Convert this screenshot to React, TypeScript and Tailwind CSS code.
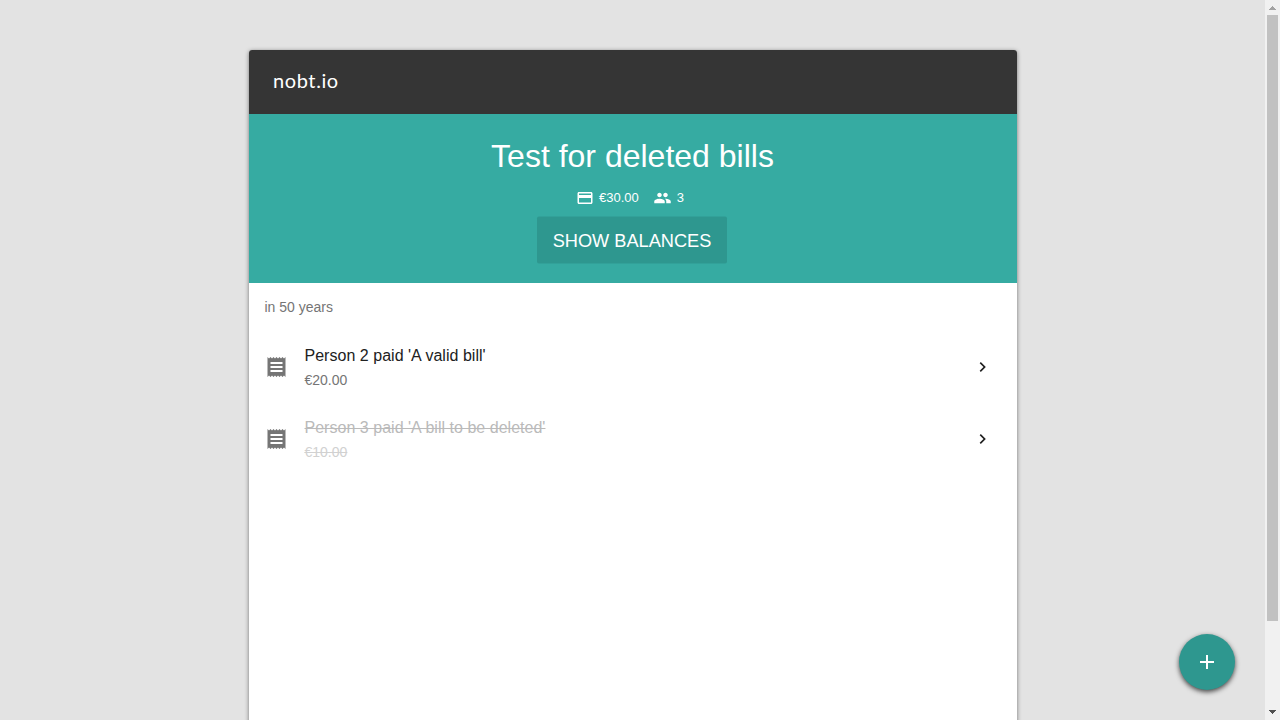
import { MdAdd, MdChevronRight, MdGroup, MdPayment, MdReceipt } from "react-icons/md";

type Bill = { title: string; amount: string; deleted: boolean };

const bills: Bill[] = [
  { title: "Person 2 paid 'A valid bill'", amount: "€20.00", deleted: false },
  { title: "Person 3 paid 'A bill to be deleted'", amount: "€10.00", deleted: true },
];

function BillRow({ title, amount, deleted }: Bill) {
  return (
    <li className="flex h-[72px] items-center pr-4 pl-[15.5px]">
      <MdReceipt className="size-6 shrink-0 translate-x-[0.5px] text-[#757575]" />
      <div className="ml-[16.5px] grow">
        <div className={deleted ? "pt-px text-base leading-6 tracking-[0.025px] text-[#bababa] line-through" : "pt-px text-base leading-6 tracking-[0.025px] text-[#212121]"}>{title}</div>
        <div className={deleted ? "pt-px text-sm leading-[22px] text-[#d1d1d1] line-through" : "pt-px text-sm leading-[22px] text-[#757575]"}>{amount}</div>
      </div>
      <MdChevronRight className="mr-[8.5px] size-5 shrink-0 translate-x-[0.5px] text-[#212121]" />
    </li>
  );
}

function Scrollbar() {
  return (
    <div className="flex w-[15px] shrink-0 flex-col items-center bg-[#f1f1f1]">
      <svg className="h-[15px] w-[15px] shrink-0" viewBox="0 0 15 15" shapeRendering="crispEdges">
        <path d="M4 10h7v-1h-1v-1h-1v-1h-1v-1h-1v1h-1v1h-1v1h-1z" fill="#a3a3a3" />
      </svg>
      <div className="h-[606px] w-[11px] bg-[#c1c1c1]" />
      <svg className="mt-auto h-[15px] w-[15px] shrink-0" viewBox="0 0 15 15" shapeRendering="crispEdges">
        <path d="M4 5h7v1h-1v1h-1v1h-1v1h-1v-1h-1v-1h-1v-1h-1z" fill="#505050" />
      </svg>
    </div>
  );
}

export default function App() {
  return (
    <div className="flex h-screen overflow-hidden bg-[#e3e3e3] font-['Liberation_Sans',Arial,sans-serif]">
      <div className="relative min-w-0 grow">
        <main className="mx-auto mt-[50px] h-[760px] w-[768px] overflow-hidden rounded-[3px] bg-white shadow-[0_1px_4px_rgba(0,0,0,0.5)]">
          <header className="flex h-16 items-center bg-[#353535] pb-[5px] pl-[24.5px] text-xl tracking-[0.6px] text-white [font-family:Lato,sans-serif]">
            nobt.io
          </header>
          <section className="flex h-[169px] flex-col items-center bg-[#36aba2] pt-5 text-white">
            <h1 className="text-[32px] leading-[44px]">Test for deleted bills</h1>
            <div className="mt-[10px] flex h-5 items-center pr-[5px] text-[13px]">
              <MdPayment className="mr-[5px] size-[18px]" />
              <span>€30.00</span>
              <MdGroup className="mr-[5px] ml-[15px] size-[18px] -translate-x-[0.5px]" />
              <span>3</span>
            </div>
            <button className="mt-[9px] mr-px h-[47px] w-[190px] -translate-y-[0.5px] rounded-[2px] bg-[#2e978f] pt-0.5 text-[18.2px] whitespace-nowrap">SHOW BALANCES</button>
          </section>
          <h2 className="h-12 px-4 text-sm leading-[48px] text-[#757575]">in 50 years</h2>
          <ul>
            {bills.map((bill) => (
              <BillRow key={bill.title} {...bill} />
            ))}
          </ul>
        </main>
        <button className="absolute right-[30px] bottom-[30px] flex size-14 items-center justify-center rounded-full bg-[#2e978f] text-white shadow-[0_2px_5px_rgba(0,0,0,0.7)]">
          <MdAdd className="size-6" />
        </button>
      </div>
      <Scrollbar />
    </div>
  );
}
